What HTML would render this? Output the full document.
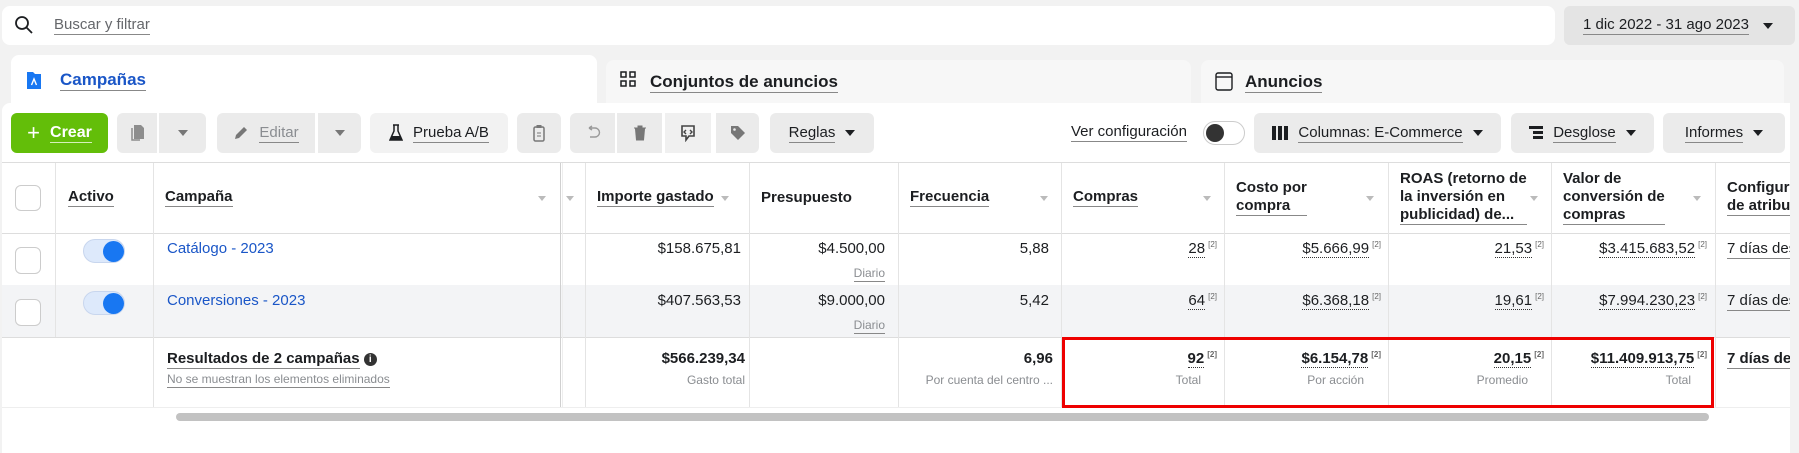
<!DOCTYPE html><html><head><meta charset="utf-8"><style>
*{box-sizing:border-box;margin:0;padding:0}
body{width:1799px;height:453px;background:#f2f2f2;font-family:"Liberation Sans",sans-serif;position:relative;overflow:hidden;color:#1c1e21}
.a{position:absolute}
.u{border-bottom:1px solid #888;padding-bottom:1px}
.btn{position:absolute;top:113px;height:40px;background:#ebebeb;border-radius:6px;display:flex;align-items:center;justify-content:center;font-size:15px;color:#1c1e21}
.hd{position:absolute;top:162px;height:71px;font-size:15px;font-weight:bold;color:#1c1e21;display:flex;align-items:center;padding-left:10px;line-height:18px}
.hd span{border-bottom:1px solid #888}
.vl{position:absolute;width:1px;background:#e4e4e4}
.c{position:absolute;font-size:15px;text-align:right}
.s{position:absolute;font-size:12px;color:#8a8d91;text-align:right}
.n{font-size:8px;color:#666;vertical-align:top;margin-left:3px}
.d{border-bottom:1px dotted #333}
.tri{display:inline-block;width:0;height:0;border-left:5px solid transparent;border-right:5px solid transparent;border-top:6px solid #1c1e21;margin-left:10px}
.st{position:absolute;width:0;height:0;border-left:4px solid transparent;border-right:4px solid transparent;border-top:5px solid #bbb}
</style></head><body>
<div class="a" style="left:2px;top:6px;width:1553px;height:39px;background:#fff;border-radius:8px"></div>
<svg class="a" style="left:14px;top:15px" width="20" height="20" viewBox="0 0 20 20"><circle cx="8" cy="8" r="6" fill="none" stroke="#1c1e21" stroke-width="1.8"/><line x1="12.5" y1="12.5" x2="18" y2="18" stroke="#1c1e21" stroke-width="1.8"/></svg>
<div class="a" style="left:54px;top:16px;font-size:15px;color:#65676b"><span class="u">Buscar y filtrar</span></div>
<div class="a" style="left:1564px;top:6px;width:231px;height:39px;background:#e4e4e4;border-radius:6px"></div>
<div class="a" style="left:1583px;top:16px;font-size:15px"><span class="u">1 dic 2022 - 31 ago 2023</span><span class="tri" style="margin-left:14px"></span></div>

<div class="a" style="left:11px;top:55px;width:586px;height:60px;background:#fff;border-radius:8px"></div>
<div class="a" style="left:606px;top:60px;width:585px;height:50px;background:#f7f7f7;border-radius:8px"></div>
<div class="a" style="left:1201px;top:60px;width:583px;height:50px;background:#f7f7f7;border-radius:8px"></div>
<svg class="a" style="left:26px;top:70px" width="16" height="20" viewBox="0 0 16 20"><path d="M1 2h6l2 2h6v15H1z" fill="#1877f2"/><path d="M5.5 15l2.5-6 2.5 6" stroke="#fff" stroke-width="1.4" fill="none"/></svg>
<div class="a" style="left:60px;top:70px;font-size:17px;font-weight:bold;color:#1a56c7"><span class="u">Campañas</span></div>
<svg class="a" style="left:620px;top:71px" width="17" height="17" viewBox="0 0 17 17" fill="none" stroke="#1c1e21" stroke-width="1.5"><rect x="1" y="1" width="5" height="5"/><rect x="10" y="1" width="5" height="5"/><rect x="1" y="10" width="5" height="5"/><rect x="10" y="10" width="5" height="5"/></svg>
<div class="a" style="left:650px;top:72px;font-size:17px;font-weight:bold"><span class="u">Conjuntos de anuncios</span></div>
<svg class="a" style="left:1215px;top:72px" width="18" height="19" viewBox="0 0 18 19" fill="none" stroke="#1c1e21" stroke-width="1.4"><rect x="1" y="1" width="16" height="17" rx="2"/><line x1="1" y1="5" x2="17" y2="5"/></svg>
<div class="a" style="left:1245px;top:72px;font-size:17px;font-weight:bold"><span class="u">Anuncios</span></div>

<div class="a" style="left:2px;top:103px;width:1795px;height:350px;background:#fff;border-radius:8px 8px 0 0"></div>

<div class="btn" style="left:11px;width:97px;background:#63be09;color:#fff;font-weight:bold;font-size:16px"><span style="font-size:22px;font-weight:normal;margin-right:10px">+</span><span style="border-bottom:1px solid #d6f0bb">Crear</span></div>
<div class="btn" style="left:117px;width:40px;border-radius:6px 0 0 6px"><svg width="16" height="18" viewBox="0 0 16 18"><path d="M5 1h7l3 3v11H5z" fill="#8d8d8d"/><path d="M3 4v12h8" stroke="#8d8d8d" stroke-width="1.5" fill="none"/></svg></div>
<div class="btn" style="left:159px;width:47px;border-radius:0 6px 6px 0"><span class="tri" style="margin:0;border-top-color:#777"></span></div>
<div class="btn" style="left:217px;width:98px;border-radius:6px 0 0 6px;color:#8a8d91"><svg width="16" height="16" viewBox="0 0 16 16" style="margin-right:10px"><path d="M2 14l1-4 8-8 3 3-8 8z" fill="#777"/></svg><span class="u">Editar</span></div>
<div class="btn" style="left:318px;width:43px;border-radius:0 6px 6px 0"><span class="tri" style="margin:0;border-top-color:#777"></span></div>
<div class="btn" style="left:370px;width:138px;background:#f2f2f2"><svg width="14" height="18" viewBox="0 0 14 18" style="margin-right:10px"><path d="M4 1h6M5 1v6L1 16h12L9 7V1" stroke="#1c1e21" stroke-width="1.5" fill="none"/><path d="M2.5 12h9l1.5 4H1z" fill="#1c1e21"/></svg><span class="u">Prueba A/B</span></div>
<div class="btn" style="left:517px;width:44px"><svg width="12" height="18" viewBox="0 0 12 18"><rect x="1" y="3" width="10" height="14" rx="1.5" fill="none" stroke="#777" stroke-width="1.5"/><rect x="3.5" y="1" width="5" height="3" fill="#777"/><line x1="4" y1="9" x2="8" y2="9" stroke="#777"/><line x1="4" y1="12" x2="8" y2="12" stroke="#777"/></svg></div>
<div class="btn" style="left:570px;width:45px;border-radius:6px 0 0 6px"><svg width="16" height="16" viewBox="0 0 16 16"><path d="M4 3H10a4 4 0 0 1 0 9H5M4 3l3-2M4 3l3 2" stroke="#999" stroke-width="1.4" fill="none"/></svg></div>
<div class="btn" style="left:617px;width:45px;border-radius:0"><svg width="14" height="16" viewBox="0 0 14 16"><path d="M1 3h12M5 3V1h4v2M2.5 4l1 11h7l1-11z" fill="#777" stroke="#777" stroke-width="1"/></svg></div>
<div class="btn" style="left:665px;width:46px;border-radius:0;background:#f0f0f0"><svg width="16" height="18" viewBox="0 0 16 18"><path d="M2 2h12v10H9l-3 4v-4H2z" fill="none" stroke="#444" stroke-width="1.6"/><path d="M6 6l-2 2 2 2M10 6l2 2-2 2" stroke="#444" stroke-width="1.4" fill="none"/></svg></div>
<div class="btn" style="left:716px;width:43px;border-radius:0 6px 6px 0"><svg width="16" height="16" viewBox="0 0 16 16"><path d="M1 1h7l7 7-7 7-7-7z" fill="#777"/><circle cx="4.5" cy="4.5" r="1.3" fill="#ebebeb"/></svg></div>
<div class="btn" style="left:770px;width:104px"><span class="u">Reglas</span><span class="tri"></span></div>
<div class="a" style="left:1071px;top:123px;font-size:15px"><span class="u">Ver configuración</span></div>
<div class="a" style="left:1203px;top:121px;width:42px;height:24px;border:1px solid #ccc;border-radius:12px;background:#fff"><div class="a" style="left:2px;top:2px;width:18px;height:18px;border-radius:50%;background:#333"></div></div>
<div class="btn" style="left:1254px;width:247px"><svg width="16" height="14" viewBox="0 0 16 14" style="margin-right:10px"><rect x="0" y="0" width="4" height="14" fill="#1c1e21"/><rect x="6" y="0" width="4" height="14" fill="#1c1e21"/><rect x="12" y="0" width="4" height="14" fill="#1c1e21"/></svg><span class="u">Columnas: E-Commerce</span><span class="tri"></span></div>
<div class="btn" style="left:1511px;width:143px"><svg width="14" height="14" viewBox="0 0 14 14" style="margin-right:10px"><rect x="0" y="0" width="14" height="3" fill="#1c1e21"/><rect x="4" y="5" width="10" height="3" fill="#1c1e21"/><rect x="4" y="10" width="10" height="3" fill="#1c1e21"/></svg><span class="u">Desglose</span><span class="tri"></span></div>
<div class="btn" style="left:1663px;width:122px"><span class="u">Informes</span><span class="tri"></span></div>

<div class="a" style="left:2px;top:162px;width:1797px;height:1px;background:#ddd"></div>
<div class="a" style="left:2px;top:285px;width:1797px;height:52px;background:#f3f4f6"></div>
<div class="a" style="left:2px;top:233px;width:1797px;height:1px;background:#ddd"></div>
<div class="a" style="left:2px;top:337px;width:1797px;height:1px;background:#ddd"></div>
<div class="a" style="left:2px;top:407px;width:1797px;height:1px;background:#eee"></div>

<div class="vl" style="left:55px;top:163px;height:174px"></div>
<div class="vl" style="left:153px;top:163px;height:244px"></div>
<div class="vl" style="left:560px;top:163px;height:244px;background:#d0d0d0"></div>
<div class="vl" style="left:562px;top:163px;height:244px;background:#eee"></div>
<div class="vl" style="left:585px;top:163px;height:244px"></div>
<div class="vl" style="left:749px;top:163px;height:244px"></div>
<div class="vl" style="left:898px;top:163px;height:244px"></div>
<div class="vl" style="left:1061px;top:163px;height:244px"></div>
<div class="vl" style="left:1224px;top:163px;height:244px"></div>
<div class="vl" style="left:1388px;top:163px;height:244px"></div>
<div class="vl" style="left:1551px;top:163px;height:244px"></div>
<div class="vl" style="left:1715px;top:163px;height:244px"></div>

<div class="a" style="left:15px;top:185px;width:26px;height:26px;border:1px solid #ccc;border-radius:6px;background:#fff"></div>
<div class="hd" style="left:58px"><span>Activo</span></div>
<div class="hd" style="left:155px"><span>Campaña</span></div>
<div class="st" style="left:538px;top:196px"></div><div class="st" style="left:566px;top:196px"></div>
<div class="hd" style="left:587px"><span>Importe gastado</span></div><div class="st" style="left:721px;top:196px"></div>
<div class="hd" style="left:751px">Presupuesto</div>
<div class="hd" style="left:900px"><span>Frecuencia</span></div><div class="st" style="left:1040px;top:196px"></div>
<div class="hd" style="left:1063px"><span>Compras</span></div><div class="st" style="left:1203px;top:196px"></div>
<div class="hd" style="left:1226px"><span>Costo por<br>compra</span></div><div class="st" style="left:1366px;top:196px"></div>
<div class="hd" style="left:1390px"><span>ROAS (retorno de<br>la inversión en<br>publicidad) de...</span></div><div class="st" style="left:1530px;top:196px"></div>
<div class="hd" style="left:1553px"><span>Valor de<br>conversión de<br>compras</span></div><div class="st" style="left:1693px;top:196px"></div>
<div class="hd" style="left:1717px;white-space:nowrap"><span>Configura<br>de atribuc</span></div>

<!-- row1 -->
<div class="a" style="left:15px;top:247px;width:26px;height:27px;border:1px solid #ccc;border-radius:6px;background:#fff"></div>
<div class="a" style="left:83px;top:239px;width:42px;height:24px;border-radius:12px;background:#dde9fb;border:1px solid #c8d6ee"><div class="a" style="left:19px;top:1px;width:21px;height:21px;border-radius:50%;background:#1877f2"></div></div>
<div class="a" style="left:167px;top:240px;font-size:15px;color:#1a56c7">Catálogo - 2023</div>
<div class="c" style="right:1058px;top:240px">$158.675,81</div>
<div class="c" style="right:914px;top:240px">$4.500,00</div>
<div class="s" style="right:914px;top:266px"><span class="u">Diario</span></div>
<div class="c" style="right:750px;top:240px">5,88</div>
<div class="c" style="right:582px;top:240px"><span class="d">28</span><span class="n">[2]</span></div>
<div class="c" style="right:418px;top:240px"><span class="d">$5.666,99</span><span class="n">[2]</span></div>
<div class="c" style="right:255px;top:240px"><span class="d">21,53</span><span class="n">[2]</span></div>
<div class="c" style="right:92px;top:240px"><span class="d">$3.415.683,52</span><span class="n">[2]</span></div>
<div class="a" style="left:1727px;top:240px;font-size:15px;white-space:nowrap"><span class="u">7 días des</span></div>
<!-- row2 -->
<div class="a" style="left:15px;top:299px;width:26px;height:27px;border:1px solid #ccc;border-radius:6px;background:#fff"></div>
<div class="a" style="left:83px;top:291px;width:42px;height:24px;border-radius:12px;background:#dde9fb;border:1px solid #c8d6ee"><div class="a" style="left:19px;top:1px;width:21px;height:21px;border-radius:50%;background:#1877f2"></div></div>
<div class="a" style="left:167px;top:292px;font-size:15px;color:#1a56c7">Conversiones - 2023</div>
<div class="c" style="right:1058px;top:292px">$407.563,53</div>
<div class="c" style="right:914px;top:292px">$9.000,00</div>
<div class="s" style="right:914px;top:318px"><span class="u">Diario</span></div>
<div class="c" style="right:750px;top:292px">5,42</div>
<div class="c" style="right:582px;top:292px"><span class="d">64</span><span class="n">[2]</span></div>
<div class="c" style="right:418px;top:292px"><span class="d">$6.368,18</span><span class="n">[2]</span></div>
<div class="c" style="right:255px;top:292px"><span class="d">19,61</span><span class="n">[2]</span></div>
<div class="c" style="right:92px;top:292px"><span class="d">$7.994.230,23</span><span class="n">[2]</span></div>
<div class="a" style="left:1727px;top:292px;font-size:15px;white-space:nowrap"><span class="u">7 días des</span></div>
<!-- total -->
<div class="a" style="left:167px;top:350px;font-size:15px;font-weight:bold"><span class="u">Resultados de 2 campañas</span> <span style="display:inline-block;width:13px;height:13px;border-radius:50%;background:#333;color:#fff;font-size:10px;text-align:center;line-height:13px;vertical-align:middle">i</span></div>
<div class="a" style="left:167px;top:372px;font-size:12px;color:#8a8d91"><span class="u">No se muestran los elementos eliminados</span></div>
<div class="c" style="right:1054px;top:350px;font-weight:bold">$566.239,34</div>
<div class="s" style="right:1054px;top:373px">Gasto total</div>
<div class="c" style="right:746px;top:350px;font-weight:bold">6,96</div>
<div class="s" style="right:746px;top:373px">Por cuenta del centro ...</div>
<div class="c" style="right:582px;top:350px;font-weight:bold"><span class="d">92</span><span class="n">[2]</span></div>
<div class="s" style="right:598px;top:373px">Total</div>
<div class="c" style="right:418px;top:350px;font-weight:bold"><span class="d">$6.154,78</span><span class="n">[2]</span></div>
<div class="s" style="right:435px;top:373px">Por acción</div>
<div class="c" style="right:255px;top:350px;font-weight:bold"><span class="d">20,15</span><span class="n">[2]</span></div>
<div class="s" style="right:271px;top:373px">Promedio</div>
<div class="c" style="right:92px;top:350px;font-weight:bold"><span class="d">$11.409.913,75</span><span class="n">[2]</span></div>
<div class="s" style="right:108px;top:373px">Total</div>
<div class="a" style="left:1727px;top:350px;font-size:15px;font-weight:bold;white-space:nowrap"><span class="u">7 días des</span></div>
<div class="a" style="left:1062px;top:337px;width:652px;height:71px;border:3px solid #ee0000"></div>
<div class="a" style="left:176px;top:413px;width:1533px;height:8px;border-radius:4px;background:#c2c2c2"></div>
<div class="a" style="left:1790px;top:103px;width:9px;height:350px;background:#f2f2f2"></div>
</body></html>
